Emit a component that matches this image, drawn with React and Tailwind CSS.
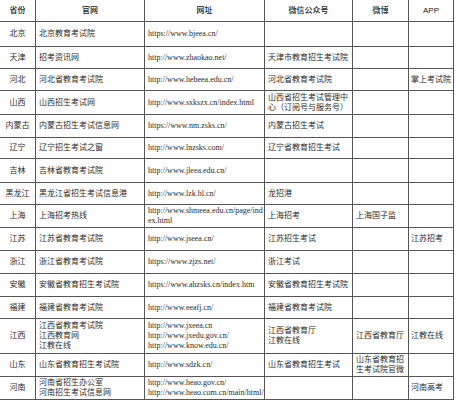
import React from "react";

const rows = [
  { h: "h-[25px]", c: ["北京", "北京教育考试院", "https://www.bjeea.cn/", "", "", ""] },
  { h: "h-[22px]", c: ["天津", "招考资讯网", "http://www.zhaokao.net/", "天津市教育招生考试院", "", ""] },
  { h: "h-[22px]", c: ["河北", "河北省教育考试院", "http://www.hebeea.edu.cn/", "河北省教育考试院", "", "掌上考试院"] },
  { h: "h-[24px]", c: ["山西", "山西招生考试网", "http://www.sxkszx.cn/index.html", "山西省招生考试管理中心（订阅号与服务号）", "", ""] },
  { h: "h-[23px]", c: ["内蒙古", "内蒙古招生考试信息网", "https://www.nm.zsks.cn/", "内蒙古招生考试", "", ""] },
  { h: "h-[21px]", c: ["辽宁", "辽宁招生考试之窗", "http://www.lnzsks.com/", "辽宁省教育招生考试", "", ""] },
  { h: "h-[24px]", c: ["吉林", "吉林省教育考试院", "http://www.jleea.edu.cn/", "", "", ""] },
  { h: "h-[22px]", c: ["黑龙江", "黑龙江省招生考试信息港", "http://www.lzk.hl.cn/", "龙招港", "", ""] },
  { h: "h-[23px]", c: ["上海", "上海招考热线", "http://www.shmeea.edu.cn/page/index.html", "上海招考", "上海国子监", ""] },
  { h: "h-[23px]", c: ["江苏", "江苏省教育考试院", "http://www.jseea.cn/", "江苏招生考试", "", "江苏招考"] },
  { h: "h-[23px]", c: ["浙江", "浙江省教育考试院", "https://www.zjzs.net/", "浙江考试", "", ""] },
  { h: "h-[23px]", c: ["安徽", "安徽省教育招生考试院", "https://www.ahzsks.cn/index.htm", "安徽省教育招生考试院", "", ""] },
  { h: "h-[22px]", c: ["福建", "福建省教育考试院", "http://www.eeafj.cn/", "福建省教育考试院", "", ""] },
  {
    h: "h-[35px]",
    c: [
      "江西",
      ["江西省教育考试院", "江西教育网", "江教在线"],
      ["http://www.jxeea.cn", "http://www.jxedu.gov.cn/", "http://www.know.edu.cn/"],
      ["江西省教育厅", "江教在线"],
      "江西省教育厅",
      "江教在线",
    ],
  },
  { h: "h-[23px]", c: ["山东", "山东省教育招生考试院", "http://www.sdzk.cn/", "山东省教育招生考试", "山东省教育招生考试院官微", ""] },
  {
    h: "h-[23px]",
    c: [
      "河南",
      ["河南省招生办公室", "河南招生考试信息网"],
      ["http://www.heao.gov.cn/", "http://www.heao.com.cn/main/html/"],
      "",
      "",
      "河南高考",
    ],
  },
];

const headers = ["省份", "官网", "网址", "微信公众号", "微博", "APP"];

const Cell = ({ value, idx }) => {
  const multi = Array.isArray(value);
  const lines = multi ? value : [value];
  return (
    <div
      className={`flex flex-col justify-center border-r border-b border-[#555] overflow-hidden ${
        idx === 0 ? "items-center text-center px-[1px]" : "items-start"
      } ${idx === 2 ? "break-all pl-[3px]" : ""} ${idx === 5 ? "pl-[2px] whitespace-nowrap" : ""} ${
        idx === 1 || idx === 3 || idx === 4 ? "px-[3px]" : ""
      }`}
    >
      {lines.map((l, i) => (
        <span key={i} className={`block w-full leading-[10px] ${multi ? "whitespace-nowrap" : ""}`}>
          {l}
        </span>
      ))}
    </div>
  );
};

export default function App() {
  return (
    <div
      className="w-[456px] h-[400px] bg-white overflow-hidden text-[8px] text-[#2b2b2b]"
      style={{ fontFamily: '"Liberation Serif", "Noto Sans CJK SC", serif' }}
    >
      <div className="grid grid-cols-[36px_109px_120px_88px_56px_45px] h-[22px]">
        {headers.map((h) => (
          <div
            key={h}
            className="flex items-center justify-center border-r border-b border-[#555] font-medium text-[#222]"
            style={{ fontFamily: '"Liberation Sans", "Noto Sans CJK SC", sans-serif' }}
          >
            {h}
          </div>
        ))}
      </div>
      {rows.map((r, ri) => (
        <div key={ri} className={`grid grid-cols-[36px_109px_120px_88px_56px_45px] ${r.h}`}>
          {r.c.map((v, i) => (
            <Cell key={i} value={v} idx={i} />
          ))}
        </div>
      ))}
    </div>
  );
}
